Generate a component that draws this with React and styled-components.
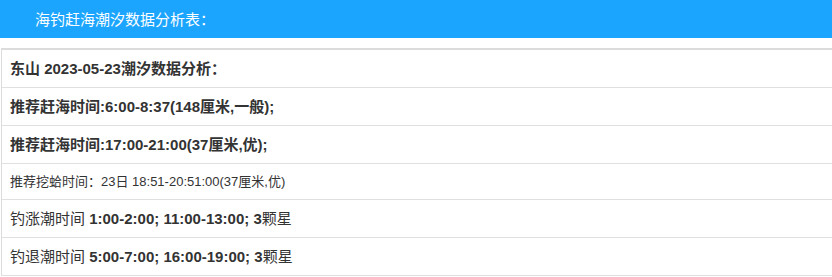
import React from 'react'
import styled, { createGlobalStyle } from 'styled-components'

const GlobalStyle = createGlobalStyle`
  html, body {
    margin: 0;
    padding: 0;
    background: #fff;
    overflow: hidden;
  }
  body {
    font-family: "Liberation Sans", Arial, "Noto Sans CJK SC", sans-serif;
    color: #333;
  }
`

const rows = [
  { text: '东山 2023-05-23潮汐数据分析：', kind: 'bold' },
  { text: '推荐赶海时间:6:00-8:37(148厘米,一般);', kind: 'bold' },
  { text: '推荐赶海时间:17:00-21:00(37厘米,优);', kind: 'bold' },
  { text: '推荐挖蛤时间：23日 18:51-20:51:00(37厘米,优)', kind: 'small' },
  { label: '钓涨潮时间', times: '1:00-2:00; 11:00-13:00; 3', tail: '颗星', kind: 'mixed' },
  { label: '钓退潮时间', times: '5:00-7:00; 16:00-19:00; 3', tail: '颗星', kind: 'mixed' },
]

const App = () => {
  return (
    <Page>
      <GlobalStyle />
      <Header>海钓赶海潮汐数据分析表：</Header>
      <Table>
        {rows.map((row, i) => (
          <Row key={i} $kind={row.kind}>
            {row.kind === 'mixed' ? (
              <>
                {row.label} <b>{row.times}</b>{row.tail}
              </>
            ) : (
              row.text
            )}
          </Row>
        ))}
      </Table>
    </Page>
  )
}

const Page = styled.div`
  width: 832px;
`

const Header = styled.div`
  background: #1ca5ff;
  color: #fff;
  height: 38px;
  line-height: 37px;
  padding-left: 35px;
  font-size: 15px;
  font-family: "Noto Sans CJK SC", sans-serif;
`

const Table = styled.div`
  margin: 10px 0 0 1px;
  border-top: 2px solid #dcdcdc;
  border-left: 1px solid #dcdcdc;
  display: flex;
  flex-direction: column;
`

const Row = styled.div`
  padding: ${p => (p.$kind === 'small' ? '8px' : '8px')} 8px;
  line-height: ${p => (p.$kind === 'small' ? '19px' : '21px')};
  font-size: ${p => (p.$kind === 'small' ? '13px' : '15px')};
  font-weight: ${p => (p.$kind === 'bold' ? 'bold' : 'normal')};
  border-bottom: 1px solid #e0e0e0;
  white-space: nowrap;

  b {
    font-weight: bold;
  }
`

export default App
